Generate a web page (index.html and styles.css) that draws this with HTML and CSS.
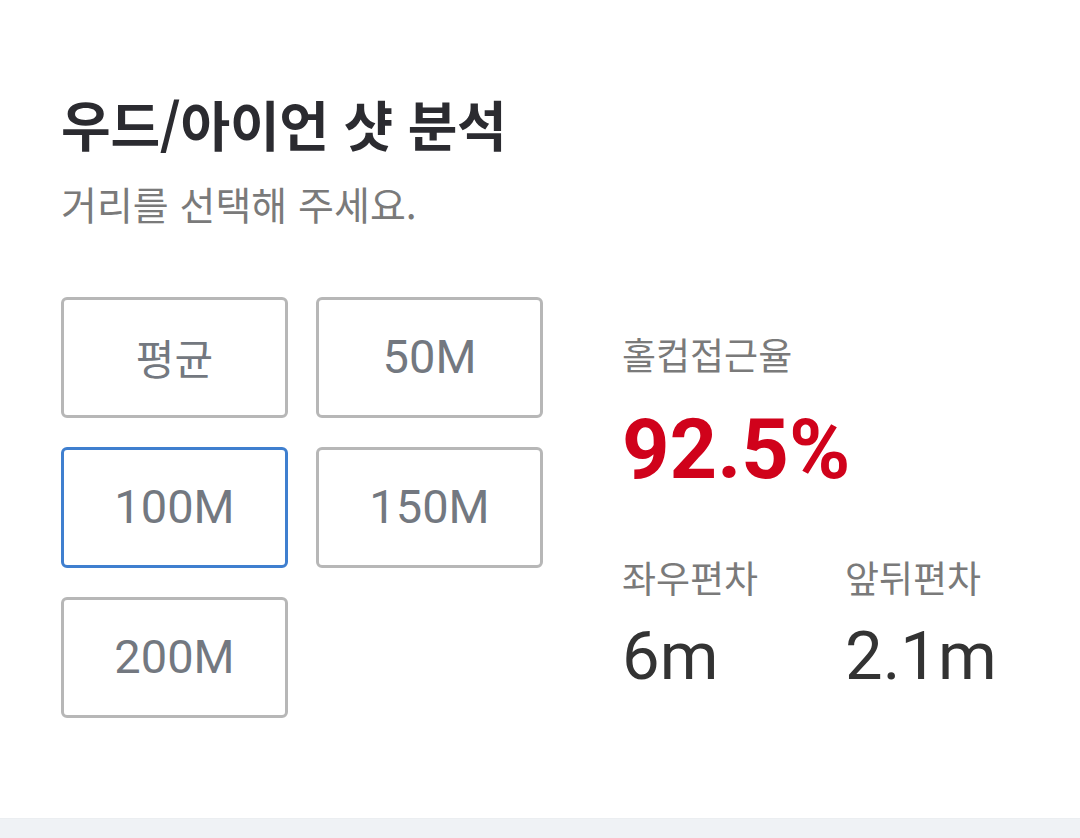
FILE: index.html
```html
<!DOCTYPE html>
<html lang="ko">
<head>
<meta charset="utf-8">
<title>우드/아이언 샷 분석</title>
<link rel="stylesheet" href="styles.css">
</head>
<body>
<main class="card">
  <h1 class="title">우드/아이언 샷 분석</h1>
  <p class="subtitle">거리를 선택해 주세요.</p>
  <div class="content">
    <div class="options">
      <button class="opt ko">평균</button>
      <button class="opt">50M</button>
      <button class="opt selected">100M</button>
      <button class="opt">150M</button>
      <button class="opt">200M</button>
    </div>
    <div class="stats">
      <div class="label">홀컵접근율</div>
      <div class="rate">92.5%</div>
      <div class="pair">
        <div class="stat">
          <div class="label">좌우편차</div>
          <div class="value">6m</div>
        </div>
        <div class="stat">
          <div class="label">앞뒤편차</div>
          <div class="value">2.1m</div>
        </div>
      </div>
    </div>
  </div>
</main>
<div class="footer-strip"></div>
</body>
</html>
```
FILE: styles.css
```css
* { box-sizing: border-box; }
html, body { margin: 0; padding: 0; background: #ffffff; }
body {
  width: 1080px;
  height: 838px;
  display: flex;
  flex-direction: column;
  overflow: hidden;
  font-family: "Noto Sans CJK KR", Roboto, sans-serif;
}
.card {
  flex: 1;
  padding: 92px 0 0 61px;
}
.title {
  margin: 0;
  font-family: "Noto Sans CJK KR", sans-serif;
  font-weight: 700;
  font-size: 54px;
  line-height: 64px;
  color: #2b2b30;
  letter-spacing: -0.3px;
}
.subtitle {
  margin: 24px 0 0;
  font-family: "Noto Sans CJK KR", sans-serif;
  font-size: 39px;
  line-height: 46px;
  color: #7a7a7a;
}
.content {
  display: flex;
  gap: 79px;
  margin-top: 71px;
}
.options {
  display: grid;
  grid-template-columns: 227px 227px;
  grid-auto-rows: 121px;
  column-gap: 28px;
  row-gap: 29px;
}
.opt {
  margin: 0;
  padding: 0 0 2px;
  background: #ffffff;
  border: 3px solid #b7b7b7;
  border-radius: 6px;
  font-family: Roboto, "Noto Sans CJK KR", sans-serif;
  font-size: 47px;
  color: #737880;
  cursor: pointer;
}
.opt.ko {
  font-family: "Noto Sans CJK KR", sans-serif;
  font-size: 42px;
}
.opt.selected {
  border-color: #3f7fcf;
}
.stats {
  padding-top: 35px;
}
.label {
  font-family: "Noto Sans CJK KR", sans-serif;
  font-size: 37px;
  line-height: 44px;
  color: #7a7a7a;
}
.rate {
  margin-top: 26px;
  font-family: Roboto, sans-serif;
  font-weight: 700;
  font-size: 83px;
  line-height: 96px;
  color: #d0021b;
}
.pair {
  display: flex;
  margin-top: 57px;
}
.stat {
  width: 223px;
}
.value {
  margin-top: 17px;
  font-family: Roboto, sans-serif;
  font-size: 67px;
  line-height: 80px;
  color: #333333;
}
.footer-strip {
  height: 20px;
  flex: none;
  background: #eff2f5;
  border-top: 1px solid #ebeef1;
}
```
